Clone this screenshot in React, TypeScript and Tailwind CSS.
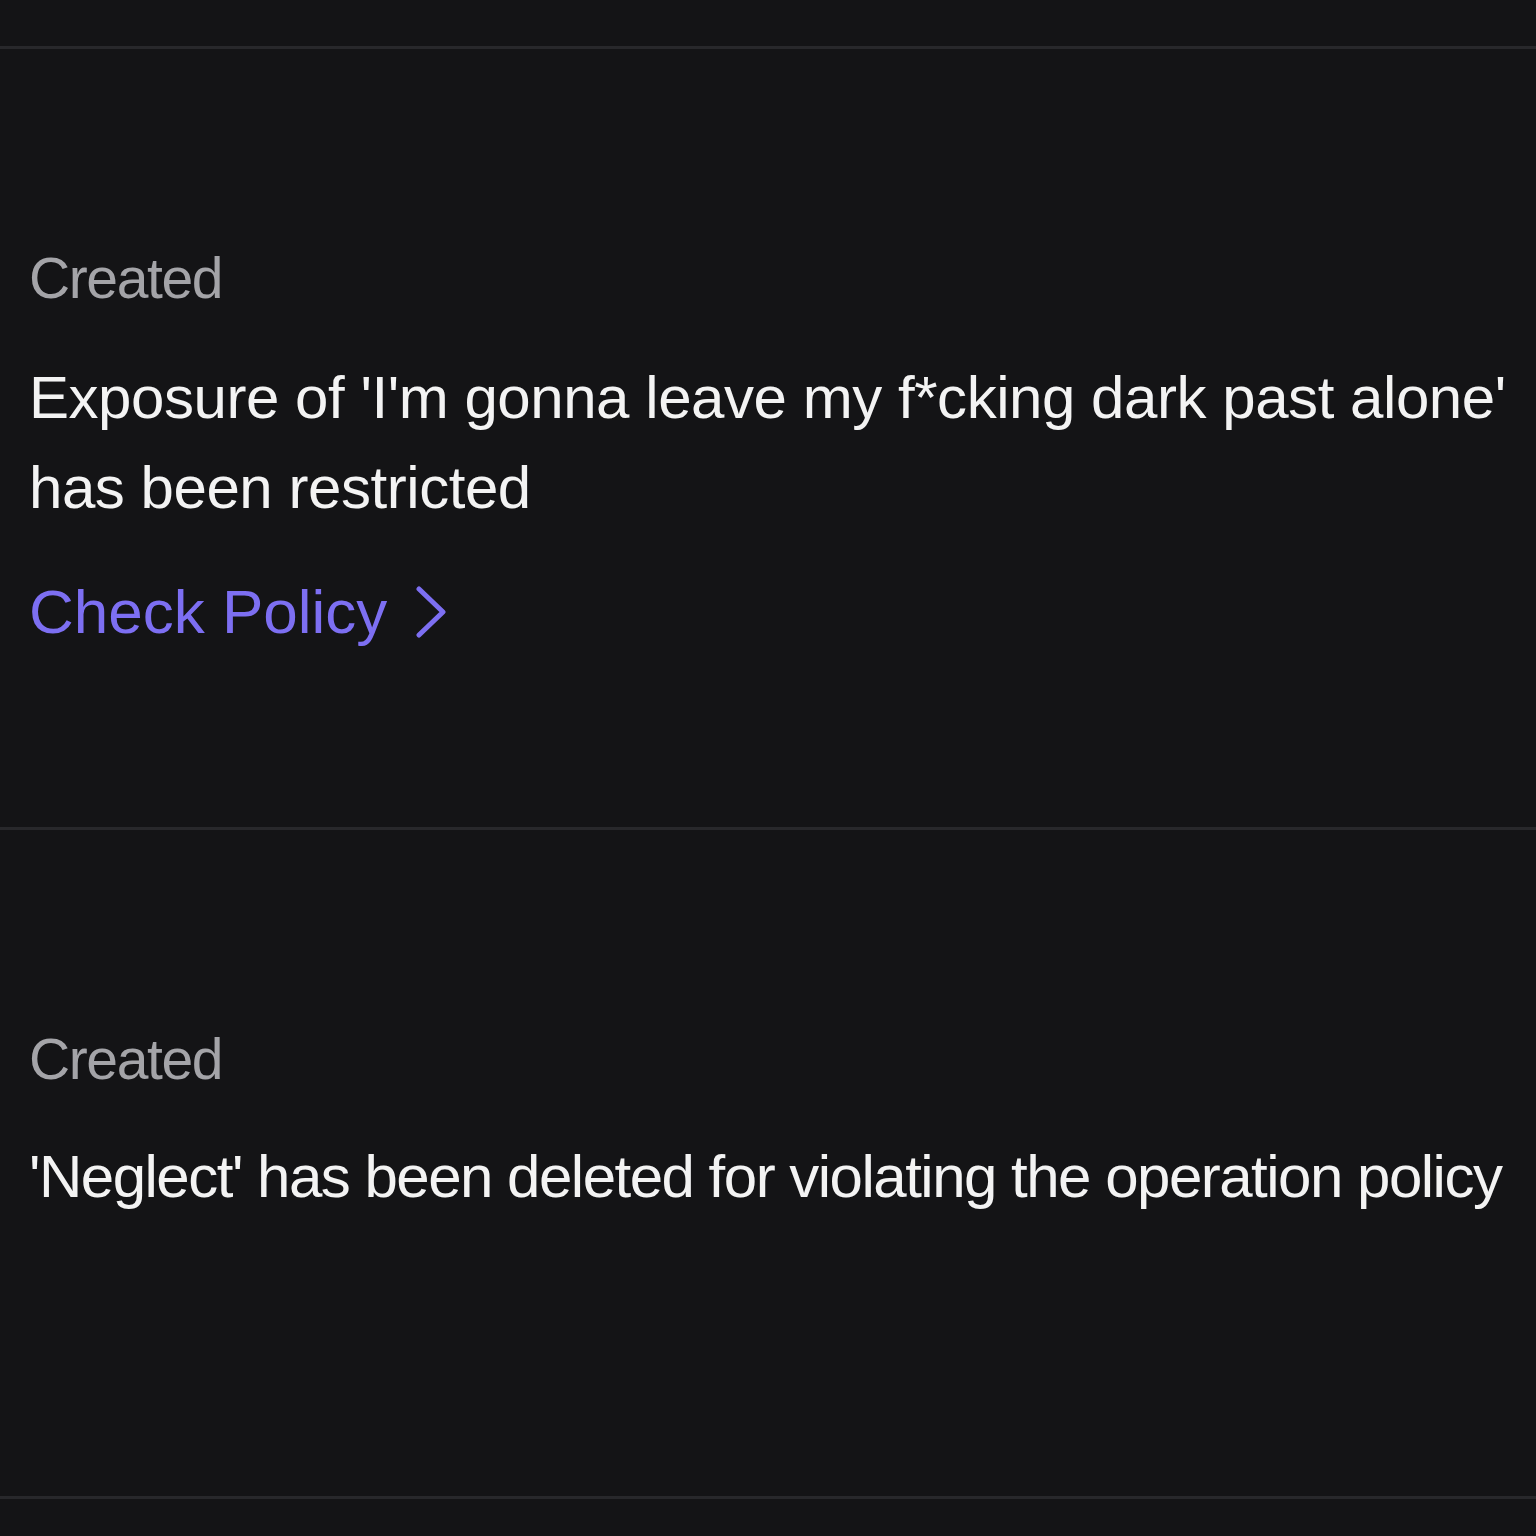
export default function App() {
  const font = { fontFamily: '"Liberation Sans", Arial, sans-serif' };
  return (
    <div className="min-h-[1536px] w-[1536px] bg-[#141416] pt-[46px]" style={font}>
      <div className="h-[3px] bg-[#28282b]" />

      <section className="pl-[29px] pt-[196px] pb-[182px]">
        <p className="text-[57px] leading-[66px] tracking-[-1.4px] text-[#a4a4a8]">Created</p>
        <p className="mt-[42px] text-[60px] leading-[90px] tracking-[-0.45px] text-[#f3f3f3]">
          Exposure of 'I'm gonna leave my f*cking dark past alone'
          <br />
          has been restricted
        </p>
        <button className="mt-[46px] flex items-center gap-[28px] text-[62px] leading-[66px] text-[#7d6ff2]">
          <span>Check Policy</span>
          <svg width="32" height="52" viewBox="0 0 32 52" fill="none">
            <path d="M4 3 L28 26 L4 49" stroke="#7d6ff2" strokeWidth="5" strokeLinecap="round" strokeLinejoin="round" />
          </svg>
        </button>
      </section>

      <div className="h-[3px] bg-[#28282b]" />

      <section className="pl-[29px] pt-[196px] pb-[274px]">
        <p className="text-[57px] leading-[66px] tracking-[-1.4px] text-[#a4a4a8]">Created</p>
        <p className="mt-[40px] whitespace-nowrap text-[60px] leading-[90px] tracking-[-1.5px] text-[#f3f3f3]">
          'Neglect' has been deleted for violating the operation policy
        </p>
      </section>

      <div className="h-[3px] bg-[#28282b]" />
    </div>
  );
}
